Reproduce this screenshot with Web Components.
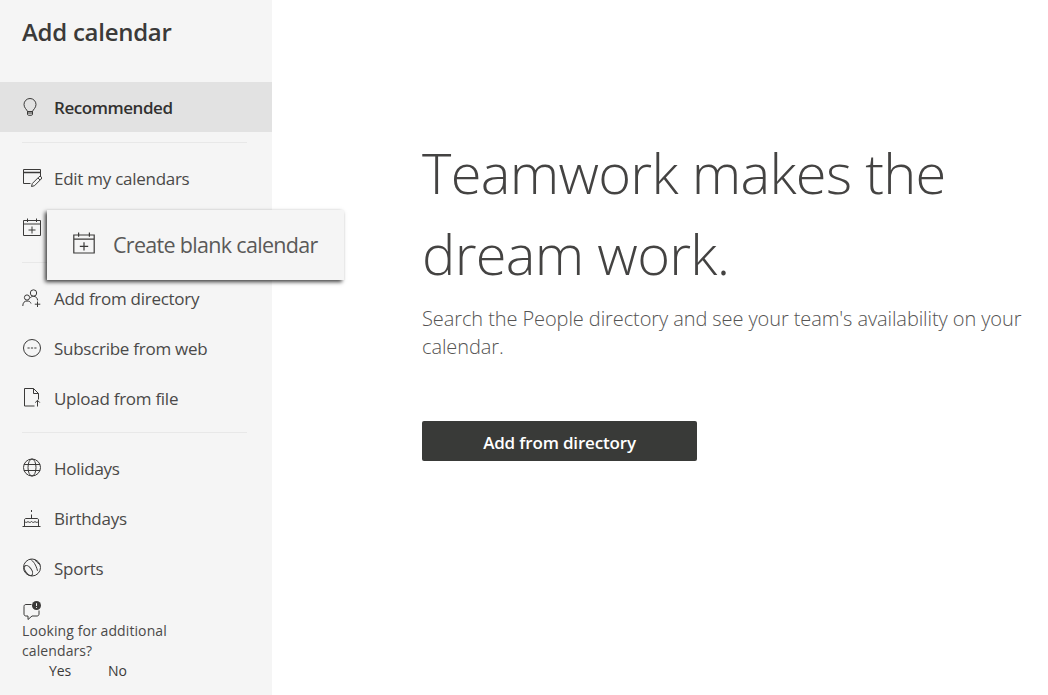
<!DOCTYPE html>
<html lang="en">
<head>
<meta charset="utf-8">
<title>Add calendar</title>
<style>
    html,body{ margin:0; height:100%; background:#fff; }
    body{ font-family:"Open Sans","Noto Sans",sans-serif; color:#3b3a39; overflow:hidden; }
</style>
</head>
<body>
<add-calendar-page></add-calendar-page>

<script>
const icons={
    bulb:`<path d="M5.5 14.5C5 12.6 2 11 2 7.500a6 6 0 0 1 12 0c0 3.500-3 5.100-3.500 7z"/><path d="M5.500 14.500h5v2.500c0 .7-.4 1.300-1 1.300h-3c-.6 0-1-.6-1-1.300zM5.500 16h5"/>`,
    edit:`<path d="M8.500 15.500H1.500V1.500h17v7"/><path d="M1.500 4.500h17" stroke-width="1.500"/><path d="M9.500 18.500l.8-3 6.700-6.700a1.500 1.500 0 0 1 2.200 2.200l-6.700 6.700zM16 10l2 2"/>`,
    calplus:`<path d="M1.500 2.500h17v15h-17zM1.500 6h17"/><path d="M5.500 .5v3.500M14.500 .5v3.500M10 8.500v7M6.500 12h7"/>`,
    people:`<circle cx="11.500" cy="5" r="3.200"/><circle cx="5" cy="9.500" r="2.600"/><path d="M.8 18c0-3.400 1.700-5 4.200-5s3.500 1 4 2.500M8.200 9.800c1-1 2-1.500 3.300-1.500 2.400 0 3.800 1.600 4.200 4.200M15.500 13.500v5.500M12.800 16.200h5.500"/>`,
    web:`<circle cx="10" cy="10" r="8.500"/><path d="M5.500 10h2.200M8.900 10h2.200M12.300 10h2.200"/>`,
    file:`<path d="M12.500 18H2.500V.5h9l5 5v6M11.500 .5v5h5"/><path d="M15.500 18.500v-6M13.200 14.600l2.300-2.300 2.300 2.300"/>`,
    globe:`<circle cx="10" cy="9.500" r="8.500"/><ellipse cx="10" cy="9.500" rx="4" ry="8.500"/><path d="M2 6.500h16M2 12.500h16"/>`,
    cake:`<path d="M.5 18.500h18M2.500 18.500v-6.500c0-1 .6-1.500 1.500-1.500h11c.9 0 1.500.5 1.500 1.500v6.500M2.500 13.500c1.200 1.200 2.300 1.200 3.500 0 1.200 1.200 2.300 1.200 3.500 0 1.200 1.200 2.300 1.200 3.500 0 1.200 1.200 2.300 1.200 3.500 0M9.500 10.500v-4M9.500 4v-2"/>`,
    sports:`<circle cx="10" cy="9.500" r="8.500"/><ellipse cx="6.500" cy="12.500" rx="3" ry="5.800" transform="rotate(-35 6.500 12.500)"/><path d="M8.500 1.300c3 2 5.500 5.500 7 11.500M12.500 1.500c1.500 2 3.500 3.800 5.800 5.500"/>`,
    feedback:`<path d="M9.500 3.500H4c-1.300 0-2 .8-2 2v7.500c0 1.200.7 2 2 2h2v3.500l4-3.500h5c1.300 0 2-.8 2-2V9.500"/><circle cx="14.500" cy="4.500" r="4.500" fill="#3b3a39" stroke="none"/><path d="M14.500 2.200v2.800M14.500 6v.9" stroke="#f5f5f5"/>`
};

class CalIcon extends HTMLElement{
    constructor(){
        super();
        this.attachShadow({mode:'open'});
        const size=this.getAttribute('size')||20;
        this.shadowRoot.innerHTML=`
            <style>
                :host{ display:flex; width:${size}px; height:${size}px; flex:none; }
                svg{ width:100%; height:100%; fill:none; stroke:#3b3a39; stroke-width:1; }
            </style>
            <svg viewBox="0 0 20 20">${icons[this.getAttribute('name')]||''}</svg>
        `;
    }
}
customElements.define('cal-icon',CalIcon);

class NavItem extends HTMLElement{
    constructor(){
        super();
        this.attachShadow({mode:'open'});
        this.shadowRoot.innerHTML=`
            <style>
                :host{ display:flex; align-items:center; height:50px; padding-left:22px; gap:12px;
                    font-size:17px; letter-spacing:-.27px; color:#4a4948; white-space:nowrap; }
                :host([selected]){ background:#e2e2e2; color:#323130; font-weight:600; letter-spacing:-.45px; }
            </style>
            <cal-icon name="${this.getAttribute('icon')}"></cal-icon>
            <span><slot></slot></span>
        `;
    }
}
customElements.define('nav-item',NavItem);

class NavDivider extends HTMLElement{
    constructor(){
        super();
        this.attachShadow({mode:'open'});
        this.shadowRoot.innerHTML=`
            <style>
                :host{ display:block; height:1px; margin:9px 25px 10px 22px; background:#e8e8e8; }
                :host([first]){ margin-top:10px; }
            </style>
        `;
    }
}
customElements.define('nav-divider',NavDivider);

class FeedbackPrompt extends HTMLElement{
    constructor(){
        super();
        this.attachShadow({mode:'open'});
        this.shadowRoot.innerHTML=`
            <style>
                :host{ display:block; padding:8px 0 0 22px; font-size:14px; line-height:20px; letter-spacing:.1px; color:#4a4948; }
                .q{ width:170px; }
                .a{ display:flex; color:#3b3a39; letter-spacing:-.1px; }
                .a span:first-child{ margin-left:27px; width:59px; }
            </style>
            <cal-icon name="feedback"></cal-icon>
            <div class="q"><slot></slot></div>
            <div class="a"><span>Yes</span><span>No</span></div>
        `;
    }
}
customElements.define('feedback-prompt',FeedbackPrompt);

class CalSidebar extends HTMLElement{
    constructor(){
        super();
        this.attachShadow({mode:'open'});
        // the label of the blank calendar row is covered by cal-tooltip, which carries the text
        this.shadowRoot.innerHTML=`
            <style>
                :host{ display:block; width:272px; flex:none; height:695px; overflow:hidden; background:#f5f5f5; }
                h2{ margin:0; height:82px; padding:15px 0 0 22px; box-sizing:border-box; font-size:24px; line-height:34px;
                    font-weight:600; letter-spacing:-.27px; color:#3b3a39; }
            </style>
            <h2>Add calendar</h2>
            <nav-item icon="bulb" selected>Recommended</nav-item>
            <nav-divider first></nav-divider>
            <nav-item icon="edit">Edit my calendars</nav-item>
            <nav-item icon="calplus"></nav-item>
            <nav-divider></nav-divider>
            <nav-item icon="people">Add from directory</nav-item>
            <nav-item icon="web">Subscribe from web</nav-item>
            <nav-item icon="file">Upload from file</nav-item>
            <nav-divider></nav-divider>
            <nav-item icon="globe">Holidays</nav-item>
            <nav-item icon="cake">Birthdays</nav-item>
            <nav-item icon="sports">Sports</nav-item>
            <feedback-prompt>Looking for additional calendars?</feedback-prompt>
        `;
    }
}
customElements.define('cal-sidebar',CalSidebar);

class PromoPanel extends HTMLElement{
    constructor(){
        super();
        this.attachShadow({mode:'open'});
        this.shadowRoot.innerHTML=`
            <style>
                :host{ display:block; flex:1; padding:132px 20px 0 150px; }
                h1{ margin:0; font-size:56px; line-height:81px; font-weight:300; letter-spacing:-.7px; color:#444342; }
                p{ margin:11px 0 0; font-size:20px; line-height:28px; font-weight:300; letter-spacing:-.09px; color:#555453; }
                button{ display:block; width:275px; height:40px; margin-top:60px; padding:2px 0 0; border:0; border-radius:2px;
                    background:#393a38; color:#fff; font:600 17px "Open Sans",sans-serif; letter-spacing:-.17px; }
            </style>
            <h1>Teamwork makes the dream work.</h1>
            <p>Search the People directory and see your team's availability on your calendar.</p>
            <button>Add from directory</button>
        `;
    }
}
customElements.define('promo-panel',PromoPanel);

class CalTooltip extends HTMLElement{
    constructor(){
        super();
        this.attachShadow({mode:'open'});
        this.shadowRoot.innerHTML=`
            <style>
                :host{ position:absolute; left:47px; top:210px; width:297px; height:70px; box-sizing:border-box;
                    display:flex; align-items:center; gap:17px; padding:0 0 2px 25px;
                    background:#f5f5f5; color:#5a5958; font-size:21.5px; letter-spacing:-.69px; white-space:nowrap;
                    box-shadow:-2px 2px 4px rgba(0,0,0,.75); }
            </style>
            <cal-icon name="calplus" size="24"></cal-icon>
            <span><slot></slot></span>
        `;
    }
}
customElements.define('cal-tooltip',CalTooltip);

class AddCalendarPage extends HTMLElement{
    constructor(){
        super();
        this.attachShadow({mode:'open'});
        this.shadowRoot.innerHTML=`
            <style>
                :host{ display:flex; position:relative; width:100%; height:695px; }
            </style>
            <cal-sidebar></cal-sidebar>
            <promo-panel></promo-panel>
            <cal-tooltip>Create blank calendar</cal-tooltip>
        `;
    }
}
customElements.define('add-calendar-page',AddCalendarPage);
</script>
</body>
</html>
